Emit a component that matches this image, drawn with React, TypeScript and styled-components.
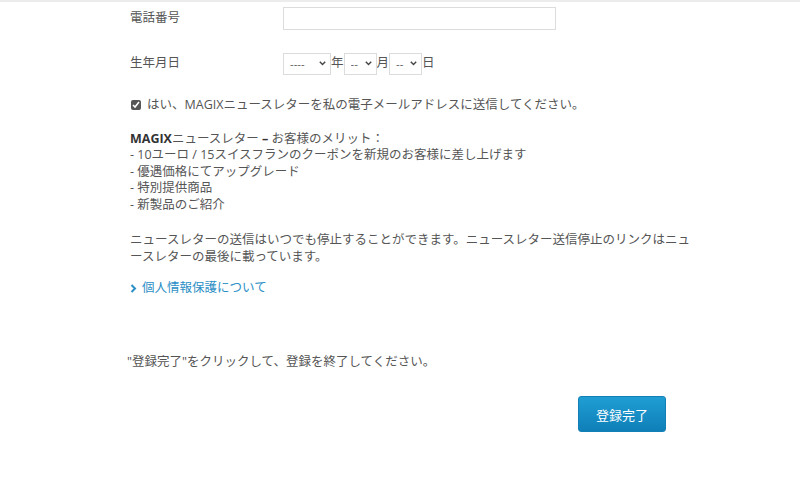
import React from 'react';
import styled, { createGlobalStyle } from 'styled-components';

const GlobalStyle = createGlobalStyle`
  html, body {
    margin: 0;
    padding: 0;
    background: #fff;
  }
  body {
    font-family: "Open Sans", "Noto Sans CJK JP", sans-serif;
    color: #555;
  }
`;

const Page = styled.div`
  border-top: 2px solid #ececec;
  min-height: 477px;
`;

const Content = styled.div`
  width: 566px;
  margin-left: 130px;
  font-size: 12.5px;
  line-height: 16.5px;
`;

const FormRow = styled.div<{ $height: number; $top?: number }>`
  display: grid;
  grid-template-columns: 153px 1fr;
  align-items: center;
  height: ${(p) => p.$height}px;
  margin-top: ${(p) => p.$top ?? 0}px;
`;

const Label = styled.label`
  font-size: 12.5px;
`;

const TextInput = styled.input`
  box-sizing: border-box;
  width: 273px;
  height: 23px;
  border: 1px solid #dcdcdc;
  background: #fff;
  outline: none;
`;

const DateRow = styled.div`
  display: flex;
  align-items: center;
  font-size: 12.5px;
`;

const SelectWrap = styled.span<{ $width: number }>`
  position: relative;
  display: inline-block;
  width: ${(p) => p.$width}px;
  height: 22px;
`;

const Select = styled.select`
  box-sizing: border-box;
  appearance: none;
  width: 100%;
  height: 100%;
  border: 1px solid #dcdcdc;
  background: #fff;
  color: #666;
  font-family: "Liberation Sans", sans-serif;
  font-size: 11px;
  padding: 0 0 0 6px;
`;

const Arrow = styled.svg`
  position: absolute;
  right: 5px;
  top: 8px;
  pointer-events: none;
`;

const CheckLine = styled.label`
  display: flex;
  align-items: center;
  gap: 6px;
  margin-top: 21px;
`;

const Check = styled.input`
  width: 10px;
  height: 10px;
  margin: 0 0 0 1px;
  accent-color: #555;
`;

const Block = styled.div<{ $top: number }>`
  margin-top: ${(p) => p.$top}px;
`;

const Strong = styled.b`
  font-weight: 700;
  color: #333;
`;

const Link = styled.a`
  display: flex;
  align-items: center;
  gap: 5px;
  color: #2b8fc6;
  text-decoration: none;
  margin-top: 15px;
  cursor: pointer;
`;

const Note = styled.p`
  margin: 57px 0 0 -3px;
`;

const ButtonRow = styled.div`
  display: flex;
  justify-content: flex-end;
  padding-right: 30px;
  margin-top: 26px;
`;

const SubmitButton = styled.button`
  width: 88px;
  height: 36px;
  border: 1px solid #127fb6;
  border-radius: 3px;
  background: linear-gradient(#1f9ed3, #0f7fb8);
  color: #fff;
  font-family: "Noto Sans CJK JP", sans-serif;
  font-size: 13px;
  cursor: pointer;
`;

const DateSelect = ({ width, value }: { width: number; value: string }) => (
  <SelectWrap $width={width}>
    <Select>
      <option>{value}</option>
    </Select>
    <Arrow width="7" height="5" viewBox="0 0 7 5">
      <path d="M0.8 0.8 L3.5 3.6 L6.2 0.8" fill="none" stroke="#444" strokeWidth="1.4" />
    </Arrow>
  </SelectWrap>
);

export default function App() {
  return (
    <Page>
      <GlobalStyle />
      <Content>
        <FormRow $height={33}>
          <Label>電話番号</Label>
          <TextInput type="text" />
        </FormRow>
        <FormRow $height={25} $top={16}>
          <Label>生年月日</Label>
          <DateRow>
            <DateSelect width={48} value="----" />
            年
            <DateSelect width={33} value="--" />
            月
            <DateSelect width={33} value="--" />
            日
          </DateRow>
        </FormRow>
        <CheckLine>
          <Check type="checkbox" defaultChecked />
          はい、MAGIXニュースレターを私の電子メールアドレスに送信してください。
        </CheckLine>
        <Block $top={17}>
          <Strong>MAGIX</Strong>ニュースレター <Strong>–</Strong> お客様のメリット：
          <br />- 10ユーロ / 15スイスフランのクーポンを新規のお客様に差し上げます
          <br />- 優遇価格にてアップグレード
          <br />- 特別提供商品
          <br />- 新製品のご紹介
        </Block>
        <Block $top={19}>
          ニュースレターの送信はいつでも停止することができます。ニュースレター送信停止のリンクはニュースレターの最後に載っています。
        </Block>
        <Link>
          <svg width="7" height="9" viewBox="0 0 7 9">
            <path d="M1.5 1 L5 4.5 L1.5 8" fill="none" stroke="#2b8fc6" strokeWidth="2" />
          </svg>
          個人情報保護について
        </Link>
        <Note>"登録完了"をクリックして、登録を終了してください。</Note>
        <ButtonRow>
          <SubmitButton>登録完了</SubmitButton>
        </ButtonRow>
      </Content>
    </Page>
  );
}
